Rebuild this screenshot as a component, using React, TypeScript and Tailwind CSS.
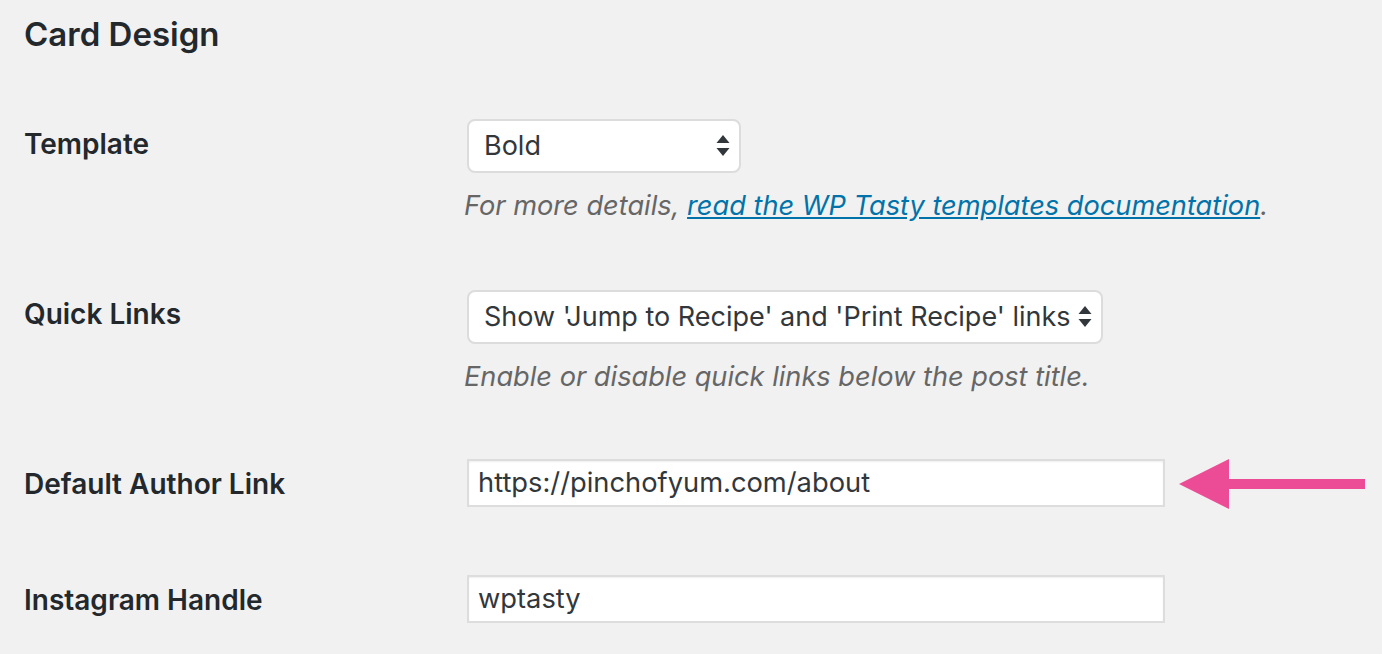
import React from "react"

const font = { fontFamily: "Inter, 'Noto Sans', sans-serif" }

function SelectArrows() {
  return (
    <svg width="14" height="24" viewBox="0 0 14 24" className="shrink-0">
      <polygon points="7,1 13.5,9 0.5,9" fill="#32373c" />
      <polygon points="0.5,14 13.5,14 7,22" fill="#32373c" />
    </svg>
  )
}

function FakeSelect({ value, width }: { value: string; width: string }) {
  return (
    <div
      className={`flex h-[54px] items-center justify-between rounded-[8px] border-2 border-[#dcdcdc] bg-white pl-[15px] pr-[9px] text-[27px] text-[#32373c] ${width}`}
    >
      <span className="whitespace-nowrap">{value}</span>
      <SelectArrows />
    </div>
  )
}

function TextInput({ value }: { value: string }) {
  return (
    <div className="flex h-[48px] w-[698px] items-center border-2 border-[#dddddd] bg-white pl-[9px] text-[27.3px] text-[#32373c] shadow-[inset_0_1px_2px_rgba(0,0,0,0.07)]">
      {value}
    </div>
  )
}

function PinkArrow() {
  return (
    <svg width="186" height="50" viewBox="0 0 186 50" className="shrink-0">
      <polygon points="0,25 50,0 50,50" fill="#ec4c95" />
      <rect x="48" y="20" width="138" height="10" fill="#ec4c95" />
    </svg>
  )
}

export default function App() {
  return (
    <div className="min-h-[654px] w-full bg-[#f1f1f1] px-6 text-[#23282d]" style={font}>
      <h2 className="pt-[14px] text-[33px] font-semibold leading-[40px]">Card Design</h2>

      {/* Template */}
      <div className="mt-[65px] flex">
        <div className="w-[443px] shrink-0 text-[28px] font-semibold leading-[50px]">Template</div>
        <div>
          <FakeSelect value="Bold" width="w-[274px]" />
          <p className="-ml-[3px] mt-[13px] text-[27.2px] italic leading-[40px] text-[#666666]">
            For more details,{" "}
            <a href="#" className="text-[#0073aa] underline">
              read the WP Tasty templates documentation
            </a>
            .
          </p>
        </div>
      </div>

      {/* Quick Links */}
      <div className="mt-[64px] flex">
        <div className="w-[443px] shrink-0 text-[28px] font-semibold leading-[48px]">Quick Links</div>
        <div>
          <FakeSelect value="Show 'Jump to Recipe' and 'Print Recipe' links" width="w-[636px]" />
          <p className="-ml-[3px] mt-[13px] text-[27.2px] italic leading-[40px] text-[#666666]">
            Enable or disable quick links below the post title.
          </p>
        </div>
      </div>

      {/* Default Author Link */}
      <div className="mt-[62px] flex">
        <div className="w-[443px] shrink-0 text-[28px] font-semibold leading-[50px]">Default Author Link</div>
        <div className="flex items-start gap-[14px]">
          <TextInput value="https://pinchofyum.com/about" />
          <PinkArrow />
        </div>
      </div>

      {/* Instagram Handle */}
      <div className="mt-[66px] flex">
        <div className="w-[443px] shrink-0 text-[28px] font-semibold leading-[50px]">Instagram Handle</div>
        <TextInput value="wptasty" />
      </div>
    </div>
  )
}
